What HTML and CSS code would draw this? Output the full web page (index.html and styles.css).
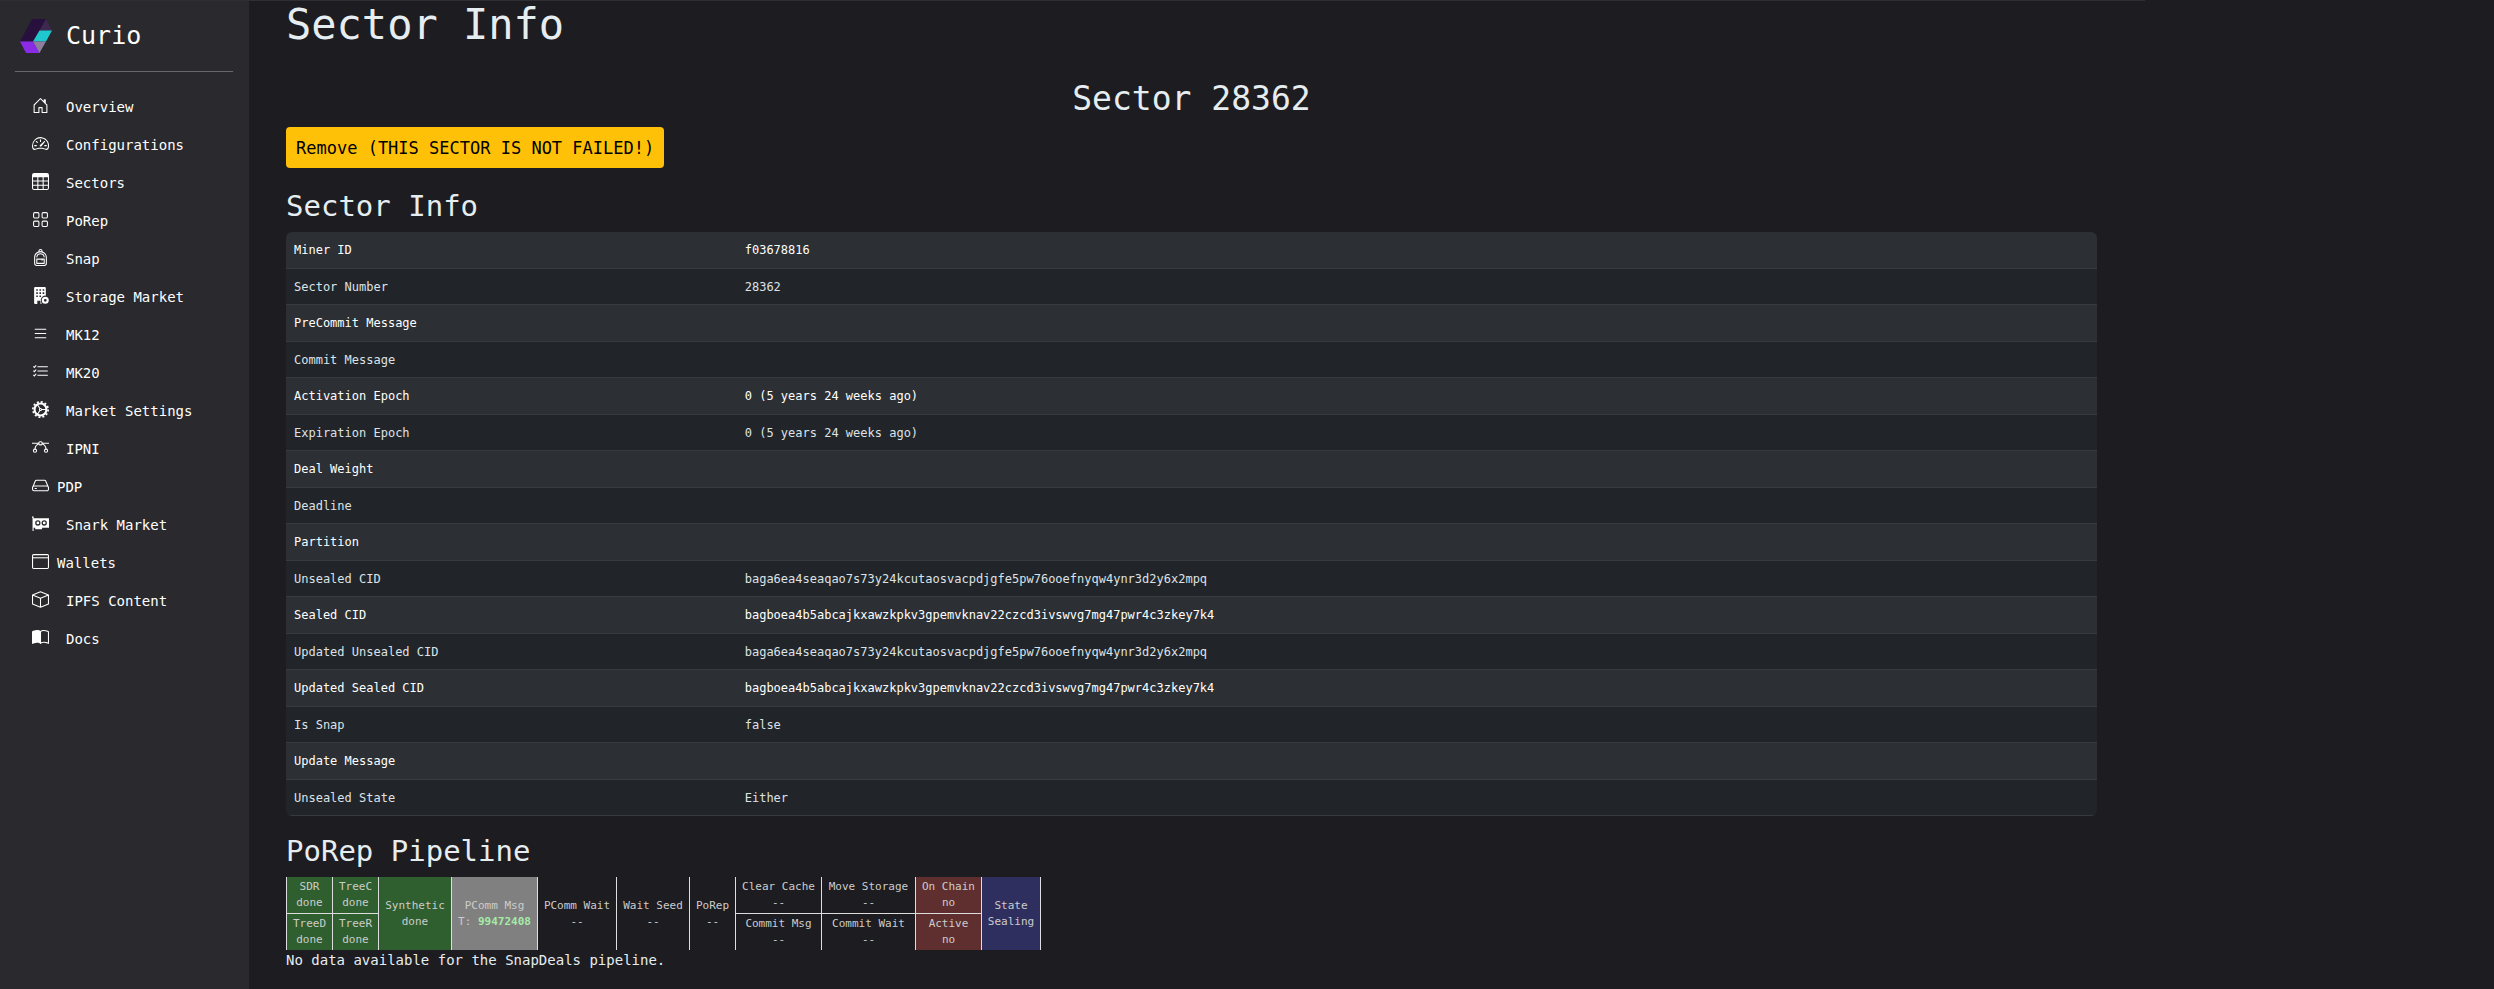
FILE: index.html
```html
<!DOCTYPE html>
<html lang="en">
<head>
    <meta charset="UTF-8">
    <meta name="viewport" content="width=device-width, initial-scale=1.0">
    <title>Sector Info</title>
    <link rel="stylesheet" href="styles.css">
</head>
<body>
    <div class="page">
        <nav class="sidebar">
            <a class="brand" href="/">
                <svg class="logo" viewBox="0 0 32 34">
                    <polygon points="12,0 26,0 13,22.5 0,22.5" fill="#27103d"/>
                    <polygon points="26,0 32,11.5 19.5,11.5" fill="#3d2850"/>
                    <polygon points="19.5,11.5 32,11.5 26,22.5 13,22.5" fill="#1fc8cf"/>
                    <polygon points="0,22.5 13,22.5 19.5,34 6,34" fill="#8a2be8"/>
                    <polygon points="13,22.5 26,22.5 19.5,34" fill="#8f7f9f"/>
                </svg>
                <span>Curio</span>
            </a>
            <hr>
            <ul class="menu">
                <li><a href="/"><svg class="icon" viewBox="0 0 16 16"><path d="M8.354 1.146a.5.5 0 0 0-.708 0l-6 6A.5.5 0 0 0 1.5 7.5v7a.5.5 0 0 0 .5.5h4.5a.5.5 0 0 0 .5-.5v-4h2v4a.5.5 0 0 0 .5.5H14a.5.5 0 0 0 .5-.5v-7a.5.5 0 0 0-.146-.354L13 5.793V2.5a.5.5 0 0 0-.5-.5h-1a.5.5 0 0 0-.5.5v1.293L8.354 1.146zM2.5 14V7.707l5.5-5.5 5.5 5.5V14H10v-4a.5.5 0 0 0-.5-.5h-3a.5.5 0 0 0-.5.5v4H2.5z"/></svg>Overview</a></li>
                <li><a href="/pages/config/"><svg class="icon" viewBox="0 0 16 16"><path d="M8 4a.5.5 0 0 1 .5.5V6a.5.5 0 0 1-1 0V4.5A.5.5 0 0 1 8 4zM3.732 5.732a.5.5 0 0 1 .707 0l.915.914a.5.5 0 1 1-.708.708l-.914-.915a.5.5 0 0 1 0-.707zM2 10a.5.5 0 0 1 .5-.5h1.586a.5.5 0 0 1 0 1H2.5A.5.5 0 0 1 2 10zm9.5 0a.5.5 0 0 1 .5-.5h1.5a.5.5 0 0 1 0 1H12a.5.5 0 0 1-.5-.5zm.754-4.246a.389.389 0 0 0-.527-.02L7.547 9.31a.91.91 0 1 0 1.302 1.258l3.434-4.297a.389.389 0 0 0-.029-.518z"/><path d="M0 10a8 8 0 1 1 15.547 2.661c-.442 1.253-1.845 1.602-2.932 1.25C11.309 13.488 9.475 13 8 13c-1.474 0-3.31.488-4.615.911-1.087.352-2.49.003-2.932-1.25A7.988 7.988 0 0 1 0 10zm8-7a7 7 0 0 0-6.603 9.329c.203.575.923.876 1.68.63C4.397 12.533 6.358 12 8 12s3.604.532 4.923.96c.757.245 1.477-.056 1.68-.631A7 7 0 0 0 8 3z"/></svg>Configurations</a></li>
                <li><a href="/pages/sectors/"><svg class="icon" viewBox="0 0 16 16"><path d="M0 2a2 2 0 0 1 2-2h12a2 2 0 0 1 2 2v12a2 2 0 0 1-2 2H2a2 2 0 0 1-2-2V2zm15 2h-4v3h4V4zm0 4h-4v3h4V8zm0 4h-4v3h3a1 1 0 0 0 1-1v-2zm-5 3v-3H6v3h4zm-5 0v-3H1v2a1 1 0 0 0 1 1h3zm-4-4h4V8H1v3zm0-4h4V4H1v3zm5-3v3h4V4H6zm4 4H6v3h4V8z"/></svg>Sectors</a></li>
                <li><a href="/pages/porep/"><svg class="icon line" viewBox="0 0 16 16"><rect x="1.5" y="1.5" width="5" height="5" rx="1"/><rect x="9.5" y="1.5" width="5" height="5" rx="1"/><rect x="1.5" y="9.5" width="5" height="5" rx="1"/><rect x="9.5" y="9.5" width="5" height="5" rx="1"/></svg>PoRep</a></li>
                <li><a href="/pages/snap/"><svg class="icon" viewBox="0 0 16 16"><path d="M4.04 7.43a4 4 0 0 1 7.92 0 .5.5 0 1 1-.99.14 3 3 0 0 0-5.94 0 .5.5 0 1 1-.99-.14ZM4 9.5a.5.5 0 0 1 .5-.5h7a.5.5 0 0 1 .5.5v4a.5.5 0 0 1-.5.5h-7a.5.5 0 0 1-.5-.5v-4Zm1 .5v3h6v-3h-1v.5a.5.5 0 0 1-1 0V10H5Z"/><path d="M6 2.341V2a2 2 0 1 1 4 0v.341c2.33.824 4 3.047 4 5.659v5.5a2.5 2.5 0 0 1-2.5 2.5h-7A2.5 2.5 0 0 1 2 13.5V8a6.002 6.002 0 0 1 4-5.659ZM7 2v.083a6.04 6.04 0 0 1 2 0V2a1 1 0 0 0-2 0Zm1 1a5 5 0 0 0-5 5v5.5A1.5 1.5 0 0 0 4.5 15h7a1.5 1.5 0 0 0 1.5-1.5V8a5 5 0 0 0-5-5Z"/></svg>Snap</a></li>
                <li><a href="/pages/market/"><svg class="icon" viewBox="0 0 16 16"><path fill-rule="evenodd" d="M3 0h9a1 1 0 0 1 1 1v7.2a4 4 0 0 0-4.5 5.3L9 16H8v-3H5v3H3a1 1 0 0 1-1-1V1a1 1 0 0 1 1-1zM4 2v1.5h1.5V2zm3 0v1.5h1.5V2zm3 0v1.5h1.5V2zM4 5v1.5h1.5V5zm3 0v1.5h1.5V5zm3 0v1.5h1.5V5zM4 8v1.5h1.5V8zm3 0v1.5h1.5V8z"/><circle class="line" cx="12.5" cy="12.5" r="2.3" stroke-width="2"/></svg>Storage Market</a></li>
                <li><a href="/pages/mk12/"><svg class="icon line" viewBox="0 0 16 16"><path d="M3 4h10M3 8h10M3 12h10" stroke-linecap="round"/></svg>MK12</a></li>
                <li><a href="/pages/mk20/"><svg class="icon line" viewBox="0 0 16 16"><path d="M5.5 3.5h9M5.5 7.5h9M5.5 11.5h9M1.5 3.5l.7.7 1.5-1.7M1.5 7.5l.7.7 1.5-1.7M1.5 11.5l.7.7 1.5-1.7" stroke-linecap="round"/></svg>MK20</a></li>
                <li><a href="/pages/market-settings/"><svg class="icon line" viewBox="0 0 16 16"><circle cx="8" cy="8" r="5.6" stroke-width="2"/><circle cx="8" cy="8" r="7.2" stroke-width="1.6" stroke-dasharray="1.9 1.87"/><circle cx="8" cy="8" r="1"/><path d="M9 8h5M7.5 7.2L5 3M7.5 8.8L5 13"/></svg>Market Settings</a></li>
                <li><a href="/pages/ipni/"><svg class="icon line" viewBox="0 0 16 16"><circle cx="2.8" cy="11" r="1.5"/><circle cx="13.2" cy="11" r="1.5"/><rect x="6.5" y="2.5" width="3" height="3" rx="1"/><path d="M0 4h6.5M9.5 4H16M6.5 4.5C4.5 5.2 3 7 2.8 9.5M9.5 4.5c2 .7 3.5 2.5 3.7 5"/></svg>IPNI</a></li>
                <li><a class="tight" href="/pages/pdp/"><svg class="icon line" viewBox="0 0 16 16"><path d="M.5 10L3 4a1.5 1.5 0 0 1 1.3-.9h7.4A1.5 1.5 0 0 1 13 4l2.5 6v1.5a1.5 1.5 0 0 1-1.5 1.5H2a1.5 1.5 0 0 1-1.5-1.5V10a1.5 1.5 0 0 1 1.5-1.5h12a1.5 1.5 0 0 1 1.5 1.5M2.5 10.8h2"/></svg>PDP</a></li>
                <li><a href="/pages/snark-market/"><svg class="icon" viewBox="0 0 16 16"><path fill-rule="evenodd" d="M0 1.500h1.5V3H16v9H9.500v1.500H3V12H1.500v3H.5V2.500H0zM5.500 5a2.500 2.500 0 1 0 0 5 2.500 2.500 0 0 0 0-5zm6 0a2.500 2.500 0 1 0 0 5 2.500 2.500 0 0 0 0-5z"/><circle cx="5.5" cy="7.5" r="1.3"/><circle cx="11.5" cy="7.5" r="1.3"/></svg>Snark Market</a></li>
                <li><a class="tight" href="/pages/wallets/"><svg class="icon line" viewBox="0 0 16 16"><rect x=".5" y="1.5" width="15" height="13" rx="1"/><path d="M.5 4.5h15"/></svg>Wallets</a></li>
                <li><a href="/pages/ipfs/"><svg class="icon line" viewBox="0 0 16 16"><path d="M8 .8l7.5 3v8.4L8 15.3.5 12.2V3.8zM.5 3.8L8 6.9l7.5-3.1M8 6.9v8.4" stroke-linejoin="round"/></svg>IPFS Content</a></li>
                <li><a href="https://docs.curiostorage.org/"><svg class="icon" viewBox="0 0 16 16"><path d="M8.5 2.687c.654-.689 1.782-.886 3.112-.752 1.234.124 2.503.523 3.388.893v9.923c-.918-.35-2.107-.692-3.287-.81-1.094-.111-2.278-.039-3.213.492V2.687zM8 1.783C7.015.936 5.587.81 4.287.94c-1.514.153-3.042.672-3.994 1.105A.5.5 0 0 0 0 2.5v11a.5.5 0 0 0 .707.455c.882-.4 2.303-.881 3.68-1.02 1.409-.142 2.59.087 3.223.877a.5.5 0 0 0 .78 0c.633-.79 1.814-1.019 3.222-.877 1.378.139 2.8.62 3.681 1.02A.5.5 0 0 0 16 13.5v-11a.5.5 0 0 0-.293-.455c-.952-.433-2.48-.952-3.994-1.105C10.413.809 8.985.936 8 1.783z"/></svg>Docs</a></li>
            </ul>
        </nav>

        <main class="content">
            <h1>Sector Info</h1>
            <h2>Sector 28362</h2>
            <button class="btn-warning" type="button">Remove (THIS SECTOR IS NOT FAILED!)</button>

            <h3>Sector Info</h3>
            <table class="info">
                <tr><td>Miner ID</td><td>f03678816</td></tr>
                <tr><td>Sector Number</td><td>28362</td></tr>
                <tr><td>PreCommit Message</td><td></td></tr>
                <tr><td>Commit Message</td><td></td></tr>
                <tr><td>Activation Epoch</td><td>0 (5 years 24 weeks ago)</td></tr>
                <tr><td>Expiration Epoch</td><td>0 (5 years 24 weeks ago)</td></tr>
                <tr><td>Deal Weight</td><td></td></tr>
                <tr><td>Deadline</td><td></td></tr>
                <tr><td>Partition</td><td></td></tr>
                <tr><td>Unsealed CID</td><td>baga6ea4seaqao7s73y24kcutaosvacpdjgfe5pw76ooefnyqw4ynr3d2y6x2mpq</td></tr>
                <tr><td>Sealed CID</td><td>bagboea4b5abcajkxawzkpkv3gpemvknav22czcd3ivswvg7mg47pwr4c3zkey7k4</td></tr>
                <tr><td>Updated Unsealed CID</td><td>baga6ea4seaqao7s73y24kcutaosvacpdjgfe5pw76ooefnyqw4ynr3d2y6x2mpq</td></tr>
                <tr><td>Updated Sealed CID</td><td>bagboea4b5abcajkxawzkpkv3gpemvknav22czcd3ivswvg7mg47pwr4c3zkey7k4</td></tr>
                <tr><td>Is Snap</td><td>false</td></tr>
                <tr><td>Update Message</td><td></td></tr>
                <tr><td>Unsealed State</td><td>Either</td></tr>
            </table>

            <h3>PoRep Pipeline</h3>
            <table class="pipeline">
                <colgroup>
                    <col class="w-tree"><col class="w-tree"><col class="w-step"><col class="w-msg"><col class="w-wait"><col class="w-step">
                    <col class="w-tree"><col class="w-msg"><col class="w-move"><col class="w-chain"><col class="w-state">
                </colgroup>
                <tr>
                    <td class="success">SDR<br>done</td>
                    <td class="success">TreeC<br>done</td>
                    <td class="success" rowspan="2">Synthetic<br>done</td>
                    <td class="active" rowspan="2">PComm Msg<br>T: <b>99472408</b></td>
                    <td rowspan="2">PComm Wait<br>--</td>
                    <td rowspan="2">Wait Seed<br>--</td>
                    <td rowspan="2">PoRep<br>--</td>
                    <td>Clear Cache<br>--</td>
                    <td>Move Storage<br>--</td>
                    <td class="failed">On Chain<br>no</td>
                    <td class="state" rowspan="2">State<br>Sealing</td>
                </tr>
                <tr>
                    <td class="success">TreeD<br>done</td>
                    <td class="success">TreeR<br>done</td>
                    <td>Commit Msg<br>--</td>
                    <td>Commit Wait<br>--</td>
                    <td class="failed">Active<br>no</td>
                </tr>
            </table>
            <p>No data available for the SnapDeals pipeline.</p>
        </main>
    </div>
</body>
</html>
```
FILE: styles.css
```css
* {
    box-sizing: border-box;
}
body {
    margin: 0;
    background-color: #1d1c21;
    color: #e6edf0;
    font-family: "DejaVu Sans Mono", "Liberation Mono", monospace;
    font-size: 14px;
    line-height: 20px;
}
.page {
    display: flex;
    width: 86%;
    min-height: 100vh;
    border-top: 1px solid #2f2e33;
}

/* sidebar */
.sidebar {
    flex: 0 0 249px;
    padding: 16px 16px 0 15px;
    background-color: #29292e;
}
.sidebar a {
    display: flex;
    align-items: center;
    color: #fff;
    text-decoration: none;
}
.sidebar .brand {
    gap: 14px;
    padding-left: 5px;
    font-size: 25px;
    line-height: 38px;
}
.logo {
    width: 32px;
    height: 34px;
}
.sidebar hr {
    margin: 16px 0;
    border: none;
    border-top: 1px solid #68686c;
}
.menu {
    margin: 0;
    padding: 0 0 0 17px;
    list-style: none;
}
.menu a {
    gap: 17px;
    height: 38px;
}
.menu a.tight {
    gap: 8px;
}
.icon {
    width: 17px;
    height: 17px;
    margin-bottom: 3px;
    fill: #fff;
}
.line {
    fill: none;
    stroke: #fff;
}

/* main column */
.content {
    flex: 1;
    padding: 0 48px 0 37px;
}
h1, h2, h3 {
    margin: 0;
    font-weight: 500;
}
h1 {
    font-size: 42px;
    line-height: 48px;
}
h2 {
    margin: 29px 0 7px;
    font-size: 33px;
    line-height: 42px;
    text-align: center;
}
h3 {
    margin: 17px 0 8px;
    font-size: 29px;
    line-height: 36px;
}
.btn-warning {
    display: block;
    margin-bottom: 20px;
    padding: 11px 10px 9px;
    border: none;
    border-radius: 4px;
    background-color: #ffc107;
    color: #000;
    font-family: inherit;
    font-size: 17px;
    line-height: 21px;
}

.info {
    width: 100%;
    border-collapse: separate;
    border-spacing: 0;
    border-radius: 6px;
    overflow: hidden;
    font-size: 12px;
    line-height: 18px;
}
.info td {
    height: 36px;
    padding: 0 6px;
    border-bottom: 1px solid #373b3e;
    background-color: #212529;
    color: #dee2e6;
}
.info td:first-child {
    width: 25%;
    padding-left: 8px;
}
.info tr:nth-child(odd) td {
    height: 37px;
    background-color: #2c3034;
    color: #fff;
}

/* pipeline */
.pipeline {
    table-layout: fixed;
    width: 754px;
    border-collapse: collapse;
    font-size: 11px;
    line-height: 16px;
    text-align: center;
    white-space: nowrap;
}
.w-tree { width: 46px; }
.w-step { width: 73px; }
.w-msg { width: 86px; }
.w-wait { width: 79px; }
.w-move { width: 94px; }
.w-chain { width: 66px; }
.w-state { width: 59px; }
.pipeline td {
    padding: 2px 0;
    border: 1px solid #ddd;
    border-top: none;
    color: #ccc;
}
.pipeline tr:last-child td,
.pipeline td[rowspan] {
    border-bottom: none;
}
.pipeline .success {
    background-color: #2f5f2f;
}
.pipeline .active {
    background-color: #808080;
}
.pipeline .failed {
    background-color: #5f2f2f;
}
.pipeline .state {
    background-color: #2f2f5f;
}
.pipeline b {
    color: #a5eaa5;
}
p {
    margin: 0;
}
```
